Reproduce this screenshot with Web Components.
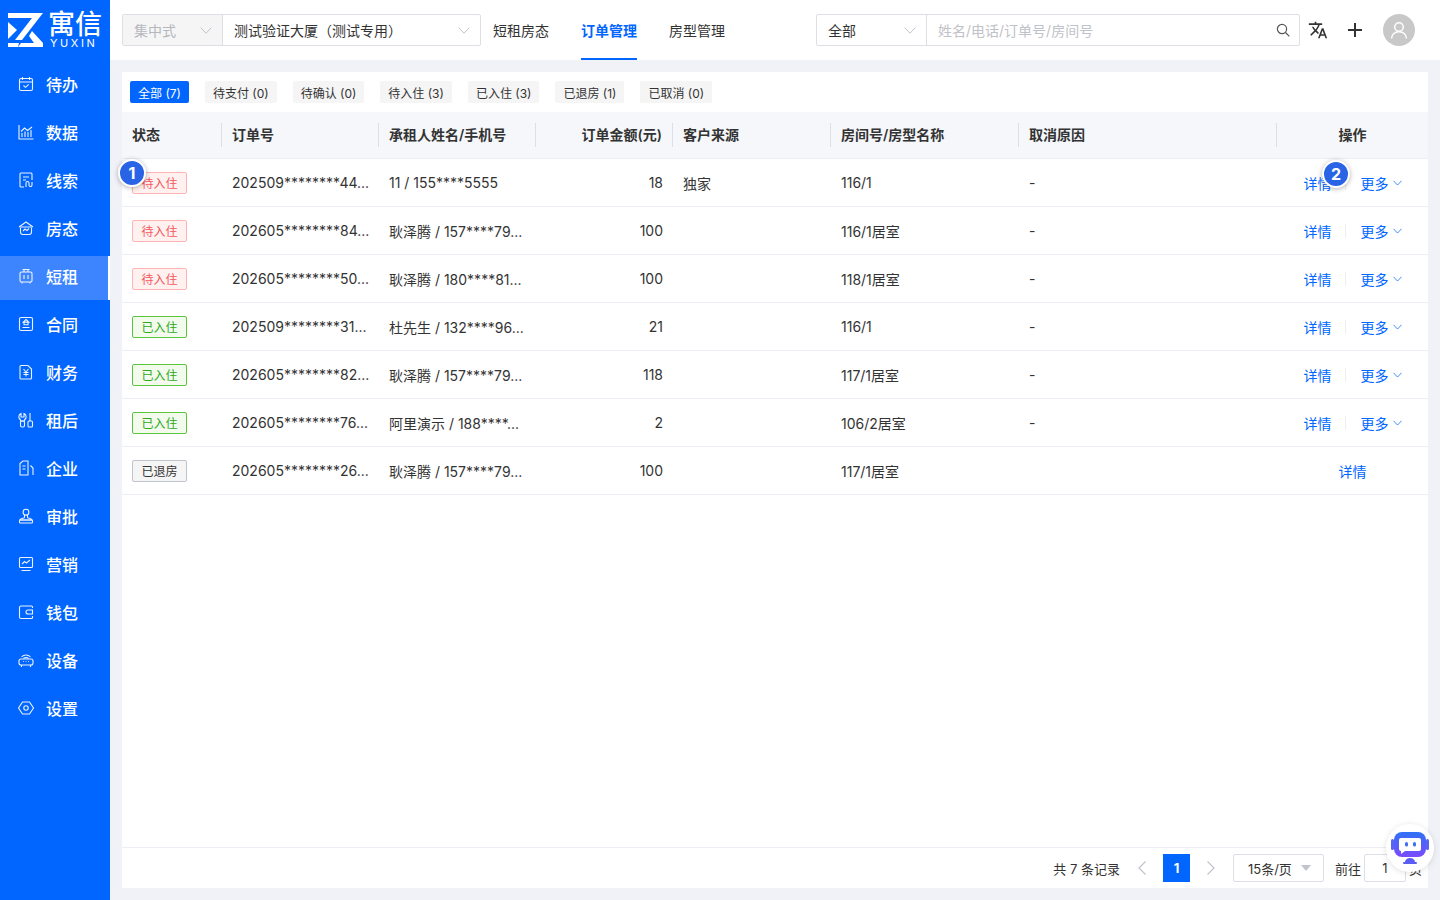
<!DOCTYPE html>
<html lang="zh">
<head>
<meta charset="utf-8">
<title>订单管理</title>
<style>
  html, body { margin: 0; height: 100%; }
  body {
    font-family: Inter, "Noto Sans CJK SC", sans-serif;
    color: #333;
    background: #f0f2f7;
    overflow: hidden;
  }
</style>
</head>
<body>
<yx-app></yx-app>

<script>
const chevron = (color = '#c0c4cc', w = 12, h = 7) =>
  `<svg width="${w}" height="${h}" viewBox="0 0 12 7" fill="none" stroke="${color}" stroke-width="1"><path d="M.6.6 6 6.2 11.4.6"/></svg>`;

const navIcons = {
  todo: '<rect x="1.5" y="2.5" width="13" height="12" rx="1.5"/><path d="M4.5 1v3M11.5 1v3M1.5 6h13" /><path d="m5.5 9.5 2 1.8 3.2-3" />',
  data: '<path d="M1 1v14h14.5" /><path d="M4 13V9M7 13V7.5M10 13V8M13 13V6" /><path d="M3 7.5 6.5 4l3 2.500L14 3" />',
  lead: '<path d="M6 15H3a1 1 0 0 1-1-1V2a1 1 0 0 1 1-1h10a1 1 0 0 1 1 1v6" /><path d="M5 5h6M5 8h3" /><path d="M8 15v-4a1.500 1.500 0 0 1 3 0v2a1.500 1.500 0 0 0 3 0v-3" />',
  room: '<path d="M1 7 8 2l7 5" /><path d="M2.500 7.500V12a2.500 2.500 0 0 0 2.500 2.500h6a2.500 2.500 0 0 0 2.500-2.500V7.500" /><path d="M2.500 7h11M5 11l2-2 2 1.500 2-2" />',
  rent: '<rect x="2" y="4" width="12" height="10" rx="1.500"/><path d="M4.500 1.500h7M6 1.500V4M10 1.500V4M6 7v4M10 7v4M4 14v1.500M12 14v1.500" />',
  contract: '<rect x="1.500" y="1.500" width="13" height="13" rx="1.500"/><path d="m8 3.500 2.800 2.600H5.200zM6 6.200v2.600h4V6.200M4.500 11.500h7" />',
  finance: '<path d="M3 1.500h7l3.500 3.500v9a1 1 0 0 1-1 1H3a1 1 0 0 1-1-1V2.500a1 1 0 0 1 1-1Z" /><path d="m5.500 5 2.500 3 2.500-3M8 8v4.500M5.500 8.500h5M5.500 10.500h5" />',
  after: '<path d="M3 1.500v3.500h3V1.500a3.500 3.500 0 0 1 .500 6.200V9H2.500V7.700A3.500 3.500 0 0 1 3 1.500Z" /><rect x="2.500" y="9" width="4" height="6" rx="1.500"/><path d="M12 1v8" /><rect x="10" y="9" width="4.500" height="6" rx="1"/>',
  company: '<path d="M2 15V3.500L5 1h5v14Z" /><path d="M4.500 6h3M4.500 9h3M12.500 5.500 15 8v7" />',
  approve: '<circle cx="8" cy="4.200" r="2.900"/><path d="M6.500 7v2.500c0 1-4.500.5-4.500 2.500h12c0-2-4.500-1.500-4.500-2.500V7" /><rect x="1.500" y="12" width="13" height="3" rx=".8"/>',
  market: '<rect x="1.500" y="1.500" width="13" height="10" rx="1"/><path d="M4 8l2.500-2.500 2 1.500L12 4M3.500 14.500h9" />',
  wallet: '<path d="M14.500 4V3a1 1 0 0 0-1-1H3a1.500 1.500 0 0 0-1.500 1.500V13A1.500 1.500 0 0 0 3 14.500h10.500a1 1 0 0 0 1-1V12" /><path d="M14.500 6H10a2 2 0 0 0 0 4h4.500Z" />',
  device: '<rect x="1" y="7" width="14" height="6" rx="2"/><path d="M3.500 13v2M12.500 13v2M5 9.500h.8M7.600 9.500h.8M10.200 9.500h.8" /><path d="M3.500 5a6 6 0 0 1 9 0M5.500 6.500a3.500 3.500 0 0 1 5 0" />',
  setting: '<path d="M4.500 2h7L15.500 8l-4 6h-7L.5 8Z" /><circle cx="8" cy="8" r="2.200"/>',
};

class YxApp extends HTMLElement {
  constructor() {
    super();
    this.attachShadow({ mode: 'open' }).innerHTML = `
      <style>
        :host { display: grid; grid-template-columns: 110px 1fr; width: 1440px; height: 900px; }
        main { display: flex; flex-direction: column; min-width: 0; }
        .body { flex: 1; padding: 12px; min-height: 0; display: flex; }
      </style>
      <yx-sidebar></yx-sidebar>
      <main>
        <yx-topbar></yx-topbar>
        <div class="body"><order-panel></order-panel></div>
      </main>
      <bot-fab></bot-fab>
    `;
  }
}

class YxSidebar extends HTMLElement {
  constructor() {
    super();
    const items = [
      ['todo', '待办'], ['data', '数据'], ['lead', '线索'], ['room', '房态'], ['rent', '短租'],
      ['contract', '合同'], ['finance', '财务'], ['after', '租后'], ['company', '企业'], ['approve', '审批'],
      ['market', '营销'], ['wallet', '钱包'], ['device', '设备'], ['setting', '设置'],
    ];
    this.attachShadow({ mode: 'open' }).innerHTML = `
      <style>
        :host { display: block; background: #0066ff; height: 900px; color: #fff; }
        .logo { height: 64px; padding: 13px 0 0 8px; box-sizing: border-box; display: flex; gap: 5px; }
        .logo svg { display: block; margin-top: 0; }
        .word { display: flex; flex-direction: column; width: 56px; }
        .cn { font-size: 27px; line-height: 24px; height: 25px; font-weight: 500; letter-spacing: 0; white-space: nowrap; }
        .en { font-family: Inter, sans-serif; font-size: 11px; line-height: 10px; letter-spacing: 2.6px; margin-left: 2px; white-space: nowrap; font-weight: 400; }
      </style>
      <div class="logo">
        <svg width="35" height="34" viewBox="0 0 35 34" fill="#fff">
          <path d="M0 0H35L14 27H7L24 5H0Z"/>
          <path d="M0 9 9 17 0 26Z"/>
          <path d="M0 30H11L10 34H0Z"/>
          <path d="M24 18 35 30V34H10L13 30H26L21 23Z"/>
        </svg>
        <div class="word"><span class="cn">寓信</span><span class="en">YUXIN</span></div>
      </div>
      ${items.map(([k, t]) => `<nav-item icon="${k}" ${t === '短租' ? 'active' : ''}>${t}</nav-item>`).join('')}
    `;
  }
}

class NavItem extends HTMLElement {
  constructor() {
    super();
    this.attachShadow({ mode: 'open' }).innerHTML = `
      <style>
        :host { display: flex; align-items: center; height: 44px; margin-bottom: 4px; padding: 0 0 4px 18px; box-sizing: border-box; gap: 12px; font-size: 16px; font-weight: 500; color: #fff; }
        :host([active]) { background: #3d85ff; box-shadow: inset -2px 0 0 #fff; }
        svg { width: 16px; height: 16px; flex: none; fill: none; stroke: #fff; stroke-width: 1.1; opacity: .92; }
      </style>
      <svg viewBox="0 0 16 16"></svg><slot></slot>
    `;
  }
  connectedCallback() {
    this.shadowRoot.querySelector('svg').innerHTML = navIcons[this.getAttribute('icon')] || '';
  }
}

class YxTopbar extends HTMLElement {
  constructor() {
    super();
    this.attachShadow({ mode: 'open' }).innerHTML = `
      <style>
        :host { display: flex; align-items: center; height: 60px; background: #fff; padding: 0 12px; box-sizing: border-box; font-size: 14px; }
        .group { display: flex; height: 32px; border: 1px solid #dcdfe6; border-radius: 2px; box-sizing: border-box; }
        .cell { display: flex; align-items: center; justify-content: space-between; box-sizing: border-box; padding: 0 10px 0 11px; white-space: nowrap; }
        .cell + .cell { border-left: 1px solid #dcdfe6; }
        .off { background: #f5f5f5; color: #b4b7bd; }
        .tabs { display: flex; gap: 32px; margin-left: 12px; align-self: stretch; }
        .tab { display: flex; align-items: center; height: 60px; box-sizing: border-box; border-bottom: 2px solid transparent; padding-top: 2px; }
        .tab.on { color: #0066ff; font-weight: 600; border-color: #0066ff; }
        .ph { color: #bfc2c8; }
        .tools { display: flex; align-items: center; margin-left: 8px; }
        .tools svg { display: block; }
        .avatar { width: 32px; height: 32px; border-radius: 50%; background: #c8c8c8; display: flex; align-items: center; justify-content: center; }
      </style>
      <div class="group" style="width:359px">
        <div class="cell off" style="width:99px">集中式${chevron()}</div>
        <div class="cell" style="flex:1">测试验证大厦（测试专用）${chevron()}</div>
      </div>
      <div class="tabs">
        <div class="tab">短租房态</div>
        <div class="tab on">订单管理</div>
        <div class="tab">房型管理</div>
      </div>
      <div class="group" style="width:484px;margin-left:91px">
        <div class="cell" style="width:109px">全部${chevron()}</div>
        <div class="cell ph" style="flex:1;padding-right:9px">姓名/电话/订单号/房间号
          <svg width="14" height="14" viewBox="0 0 14 14" fill="none" stroke="#555" stroke-width="1.200"><circle cx="6" cy="6" r="4.600"/><path d="m9.500 9.500 3.800 3.800"/></svg>
        </div>
      </div>
      <div class="tools">
        <svg width="20" height="20" viewBox="0 0 24 24" fill="#333"><path d="M12.870 15.070l-2.540-2.510.03-.03c1.740-1.940 2.980-4.170 3.710-6.530H17V4h-7V2H8v2H1v1.990h11.170C11.500 7.920 10.440 9.750 9 11.350 8.070 10.320 7.300 9.190 6.690 8h-2c.73 1.630 1.730 3.170 2.980 4.560l-5.090 5.020L4 19l5-5 3.110 3.110.76-2.040zM18.500 10h-2L12 22h2l1.120-3h4.750L21 22h2l-4.500-12zm-2.620 7l1.620-4.330L19.120 17h-3.240z"/></svg>
        <svg style="margin-left:20px" width="14" height="14" viewBox="0 0 14 14" stroke="#333" stroke-width="2"><path d="M7 0v14M0 7h14"/></svg>
        <div class="avatar" style="margin-left:21px">
          <svg width="20" height="20" viewBox="0 0 20 20" fill="none" stroke="#fff" stroke-width="1.500"><circle cx="10" cy="7" r="4.300"/><path d="M2.500 18.500c.3-4 3.300-6.800 7.500-6.800s7.200 2.800 7.500 6.800"/></svg>
        </div>
      </div>
    `;
  }
}

class StatusTag extends HTMLElement {
  constructor() {
    super();
    this.attachShadow({ mode: 'open' }).innerHTML = `
      <style>
        :host { display: inline-flex; align-items: center; justify-content: center; width: 55px; height: 22px; box-sizing: border-box; border: 1px solid; border-radius: 2px; font-size: 12px; }
        :host([kind=wait]) { color: #f5555a; background: #fff1f0; border-color: #ffb3b3; }
        :host([kind=in]) { color: #2fa81e; background: #f2fbec; border-color: #5cc43f; }
        :host([kind=out]) { color: #333; background: #f5f5f5; border-color: #c0c4cc; }
      </style>
      <slot></slot>
    `;
  }
}

class OrderPanel extends HTMLElement {
  constructor() {
    super();
    const tabs = ['全部 (7)', '待支付 (0)', '待确认 (0)', '待入住 (3)', '已入住 (3)', '已退房 (1)', '已取消 (0)'];
    const heads = ['状态', '订单号', '承租人姓名/手机号', '订单金额(元)', '客户来源', '房间号/房型名称', '取消原因', '操作'];
    const kinds = { 待入住: 'wait', 已入住: 'in', 已退房: 'out' };
    const rows = [
      ['待入住', '202509********44...', '11 / 155****5555', '18', '独家', '116/1', '-'],
      ['待入住', '202605********84...', '耿泽腾 / 157****79...', '100', '', '116/1居室', '-'],
      ['待入住', '202605********50...', '耿泽腾 / 180****81...', '100', '', '118/1居室', '-'],
      ['已入住', '202509********31...', '杜先生 / 132****96...', '21', '', '116/1', '-'],
      ['已入住', '202605********82...', '耿泽腾 / 157****79...', '118', '', '117/1居室', '-'],
      ['已入住', '202605********76...', '阿里演示 / 188****...', '2', '', '106/2居室', '-'],
      ['已退房', '202605********26...', '耿泽腾 / 157****79...', '100', '', '117/1居室', ''],
    ];
    const ops = (short) => short
      ? '<a>详情</a>'
      : `<a>详情</a><i></i><a>更多</a><span class="ch">${chevron('#0066ff', 9, 6)}</span>`;
    this.attachShadow({ mode: 'open' }).innerHTML = `
      <style>
        :host { display: flex; flex-direction: column; flex: 1; position: relative; background: #fff; font-size: 14px; min-width: 0; }
        .filters { display: flex; gap: 16px; height: 40px; align-items: center; padding: 0 8px; box-sizing: border-box; }
        .filters span { display: flex; align-items: center; height: 22px; padding: 0 8px; background: #f5f5f5; border-radius: 2px; font-size: 12px; white-space: nowrap; }
        .filters .on { background: #0066ff; color: #fff; }
        .table { flex: 1; min-height: 0; }
        .row { display: grid; grid-template-columns: 100px 157px 157px 137px 158px 188px 258px 151px; align-items: center; height: 48px; box-sizing: border-box; border-bottom: 1px solid #ebeef5; }
        .head { height: 47px; background: #f5f7fa; font-weight: 600; }
        .head div { height: 24px; line-height: 24px; border-right: 1px solid #dcdfe6; }
        .head div:last-child { border-right: 0; text-align: center; }
        .row > div { padding: 0 10px; white-space: nowrap; box-sizing: border-box; min-width: 0; }
        .num { text-align: right; }
        .op { display: flex; align-items: center; justify-content: center; color: #0066ff; padding: 0 !important; }
        .op i { width: 1px; height: 14px; background: #ebeef5; margin: 0 15px 0 13px; }
        .ch { display: inline-flex; margin-left: 4px; }
        .ch svg { display: block; }
        step-badge.a { left: -4px; top: 87px; }
        step-badge.b { left: 1200px; top: 88px; }
        order-pager { flex: none; }
      </style>
      <div class="filters">${tabs.map((t, i) => `<span class="${i ? '' : 'on'}">${t}</span>`).join('')}</div>
      <div class="table">
        <div class="row head">${heads.map((h, i) => `<div class="${i === 3 ? 'num' : ''}">${h}</div>`).join('')}</div>
        ${rows.map((r) => `
          <div class="row">
            <div><status-tag kind="${kinds[r[0]]}">${r[0]}</status-tag></div>
            <div>${r[1]}</div>
            <div>${r[2]}</div>
            <div class="num">${r[3]}</div>
            <div>${r[4]}</div>
            <div>${r[5]}</div>
            <div>${r[6]}</div>
            <div class="op">${ops(r[0] === '已退房')}</div>
          </div>`).join('')}
      </div>
      <order-pager></order-pager>
      <step-badge class="a">1</step-badge>
      <step-badge class="b">2</step-badge>
    `;
  }
}

class StepBadge extends HTMLElement {
  constructor() {
    super();
    this.attachShadow({ mode: 'open' }).innerHTML = `
      <style>
        :host { position: absolute; display: flex; align-items: center; justify-content: center; width: 28px; height: 28px; box-sizing: border-box; border: 2px solid #fff; border-radius: 50%; background: #2a64e6; color: #fff; font-size: 16px; font-weight: 700; box-shadow: 0 1px 5px rgba(0,0,0,.3); }
      </style>
      <slot></slot>
    `;
  }
}

class OrderPager extends HTMLElement {
  constructor() {
    super();
    this.attachShadow({ mode: 'open' }).innerHTML = `
      <style>
        :host { display: flex; align-items: center; justify-content: flex-end; height: 41px; box-sizing: border-box; border-top: 1px solid #ebeef5; padding-right: 6px; font-size: 13px; white-space: nowrap; }
        .arrow { display: flex; width: 8px; justify-content: center; }
        .cur { width: 27px; height: 28px; background: #0066ff; color: #fff; font-weight: 700; display: flex; align-items: center; justify-content: center; margin: 0 17px; }
        .size { width: 91px; height: 28px; margin-left: 18px; box-sizing: border-box; border: 1px solid #dcdfe6; border-radius: 2px; display: flex; align-items: center; justify-content: space-between; padding: 0 12px 0 14px; }
        .tri { width: 0; height: 0; border: 5.500px solid transparent; border-top: 6px solid #c0c4cc; border-bottom: 0; }
        .jump { margin-left: 11px; }
        .input { width: 42px; height: 28px; margin: 0 3px; box-sizing: border-box; border: 1px solid #dcdfe6; border-radius: 2px; display: flex; align-items: center; justify-content: center; }
      </style>
      <span>共 7 条记录</span>
      <span class="arrow" style="margin-left:18px"><svg width="8" height="14" viewBox="0 0 8 14" fill="none" stroke="#c0c4cc" stroke-width="1.200"><path d="M7.500.5 1 7l6.500 6.500"/></svg></span>
      <span class="cur">1</span>
      <span class="arrow"><svg width="8" height="14" viewBox="0 0 8 14" fill="none" stroke="#c0c4cc" stroke-width="1.200"><path d="M.5.5 7 7 .5 13.500"/></svg></span>
      <span class="size">15条/页<span class="tri"></span></span>
      <span class="jump">前往</span>
      <span class="input">1</span>
      <span>页</span>
    `;
  }
}

class BotFab extends HTMLElement {
  constructor() {
    super();
    this.attachShadow({ mode: 'open' }).innerHTML = `
      <style>
        :host { position: fixed; left: 1386px; top: 824px; width: 48px; height: 48px; border-radius: 50%; background: #fff; box-shadow: 0 1px 6px rgba(0,0,0,.12); display: flex; align-items: center; justify-content: center; }
        svg { display: block; }
      </style>
      <svg width="38" height="34" viewBox="0 0 38 34">
        <defs><linearGradient id="g" x1="0" y1="0" x2="0" y2="1"><stop offset="0" stop-color="#2f72f5"/><stop offset="1" stop-color="#7b4bff"/></linearGradient></defs>
        <rect x="0" y="8" width="3" height="11" rx="1.500" fill="#5a62f0"/>
        <rect x="35" y="8" width="3" height="11" rx="1.500" fill="#5a62f0"/>
        <rect x="3" y="1" width="32" height="25" rx="8" fill="url(#g)"/>
        <path d="M10 7h18a2 2 0 0 1 2 2v9a2 2 0 0 1-2 2H14l-4 3v-3a2 2 0 0 1-2-2V9a2 2 0 0 1 2-2Z" fill="#fff"/>
        <rect x="14" y="11" width="3" height="4.500" rx="1.500" fill="#3f6cf5"/>
        <rect x="22" y="11" width="3" height="4.500" rx="1.500" fill="#3f6cf5"/>
        <path d="M14 31c0-2 2-4 5-4s5 2 5 4Z" fill="#5a5cf5"/>
        <rect x="12" y="31" width="14" height="2" rx="1" fill="#5a5cf5"/>
      </svg>
    `;
  }
}

customElements.define('yx-app', YxApp);
customElements.define('yx-sidebar', YxSidebar);
customElements.define('nav-item', NavItem);
customElements.define('yx-topbar', YxTopbar);
customElements.define('status-tag', StatusTag);
customElements.define('order-panel', OrderPanel);
customElements.define('step-badge', StepBadge);
customElements.define('order-pager', OrderPager);
customElements.define('bot-fab', BotFab);
</script>
</body>
</html>
